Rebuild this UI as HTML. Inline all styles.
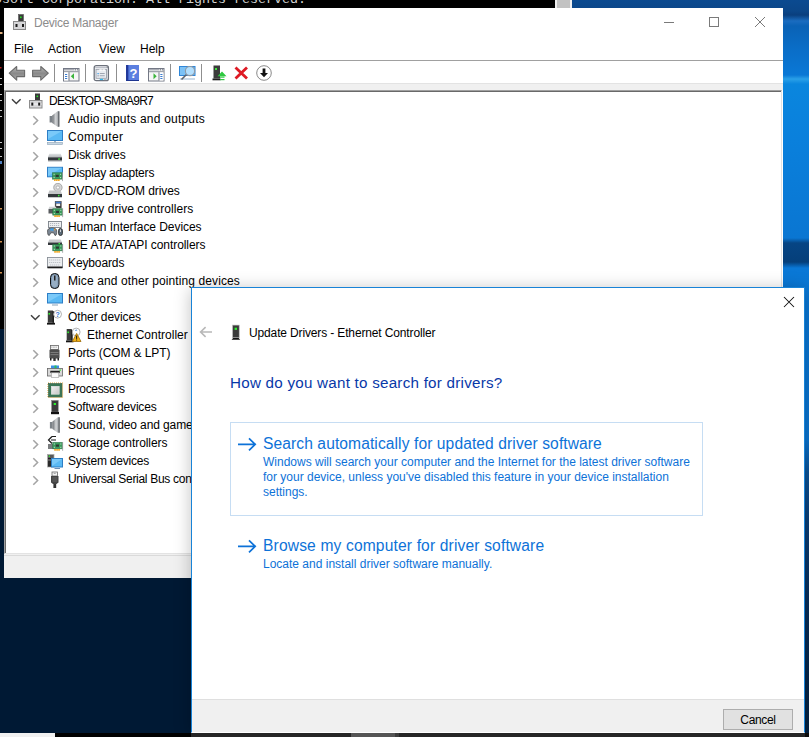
<!DOCTYPE html>
<html><head><meta charset="utf-8">
<style>
*{box-sizing:border-box;margin:0;padding:0}
html,body{width:809px;height:737px;overflow:hidden;position:relative;background:#001934;font-family:"Liberation Sans",sans-serif;}
.abs{position:absolute}
#blue{left:572px;top:0;width:237px;height:737px;background:linear-gradient(180deg,#0b4a90 0px,#0b4688 11px,#0a3f7e 15px,#1a6cc0 21px,#0a62b6 26px,#0a6ec8 50px,#0a78d6 75px,#2aa0e8 79px,#0a86de 84px,#0a80dc 140px,#0a76d2 238px,#064584 243px,#053f7a 262px,#0a78d6 268px,#0a74d0 440px,#0b5398 472px,#0a3f78 520px,#072f5c 600px,#03203f 737px)}
#console{left:0;top:0;width:555px;height:329px;background:#000}
#cscroll{left:555px;top:0;width:17px;height:329px;background:#f0f0f0}
#cthumb{left:557px;top:0;width:13px;height:8px;background:#c2c2c2}
#ctext{left:-6px;top:-8px;font-family:"Liberation Mono",monospace;font-size:13.33px;line-height:16px;color:#d4d4d4;white-space:pre}
#dm{left:3px;top:7px;width:781px;height:572px;background:#fff;background-clip:padding-box;border:1px solid transparent}
#dlg{left:191px;top:287px;width:614px;height:446px;background:#fff;border:1px solid #1883d7;border-bottom:1px solid #fff;box-shadow:0 2px 16px rgba(0,0,0,0.25)}


.t{position:absolute;white-space:nowrap;font-family:"Liberation Sans",sans-serif;color:#000}
.tr{font-size:12px;line-height:18px;letter-spacing:-0.1px}
.sep{top:64px;width:1px;height:18px;background:#8f8f8f}
#tree{left:4px;top:90px;width:778px;height:464px;border-top:1px solid #a0a0a0;border-left:1px solid #a0a0a0;border-right:1px solid #e3e3e3;border-bottom:1px solid #e3e3e3}
#tree:before{content:"";position:absolute;left:0;top:0;right:0;bottom:0;border-top:1px solid #696969;border-left:1px solid #696969}
</style></head><body>
<div class="abs" id="blue"></div>
<div class="abs" id="console"></div>
<div class="abs" id="cscroll"></div>
<div class="abs" id="cthumb"></div>
<div class="abs" id="ctext">osoft Corporation. All rights reserved.</div>
<!-- DM window -->
<div class="abs" id="dm"></div>
<svg class="abs" style="left:13px;top:14px" width="14" height="17" viewBox="0 0 14 17">
 <rect x="5.5" y="0.5" width="5" height="7" fill="#3a3a3a" stroke="#555" stroke-width="0.6"/>
 <rect x="7" y="2.5" width="1.6" height="1.6" fill="#22e022"/>
 <rect x="0.5" y="7.5" width="12" height="8" fill="#d6d6d8" stroke="#8a8a8a"/>
 <rect x="2.5" y="10" width="2" height="3" fill="#1a1a1a"/>
 <rect x="9" y="10" width="2" height="3" fill="#1a1a1a"/>
</svg>
<div class="abs t" style="left:34px;top:14px;font-size:12px;line-height:18px;color:#8c8c8c;letter-spacing:-0.25px">Device Manager</div>
<div class="abs" style="left:664px;top:22px;width:10px;height:1px;background:#7a7a7a"></div>
<div class="abs" style="left:709px;top:17px;width:10px;height:10px;border:1px solid #7a7a7a"></div>
<svg class="abs" style="left:754px;top:16px" width="12" height="12" viewBox="0 0 12 12"><path d="M1 1L11 11M11 1L1 11" stroke="#7a7a7a" stroke-width="1"/></svg>
<div class="abs t" style="left:14px;top:40px;font-size:12px;line-height:18px">File</div>
<div class="abs t" style="left:48px;top:40px;font-size:12px;line-height:18px">Action</div>
<div class="abs t" style="left:99px;top:40px;font-size:12px;line-height:18px">View</div>
<div class="abs t" style="left:140px;top:40px;font-size:12px;line-height:18px">Help</div>
<div class="abs" style="left:4px;top:60px;width:779px;height:1px;background:#a0a0a0"></div>
<div class="abs" style="left:4px;top:83px;width:779px;height:1px;background:#e3e3e3"></div>
<div class="abs" style="left:4px;top:84px;width:779px;height:6px;background:#f0f0f0"></div>
<div class="abs" id="tree"></div>
<div class="abs" style="left:4px;top:554px;width:779px;height:24px;background:#f0f0f0"></div><div class="abs" style="left:4px;top:555px;width:779px;height:1px;background:#dadada"></div>
<!-- toolbar -->
<svg class="abs" style="left:8px;top:65px" width="42" height="17" viewBox="0 0 42 17">
 <defs><linearGradient id="ga" x1="0" y1="0" x2="0" y2="1"><stop offset="0" stop-color="#b8b8b8"/><stop offset="0.5" stop-color="#8a8a8a"/><stop offset="1" stop-color="#a8a8a8"/></linearGradient></defs>
 <path d="M1.2 8.2L8.7 1.5V5.2H16.6V11.6H8.7V15.2Z" fill="url(#ga)" stroke="#6a6a6a" stroke-width="1.1" stroke-linejoin="round"/>
 <path d="M40.3 8.2L32.8 1.5V5.2H24.6V11.6H32.8V15.2Z" fill="url(#ga)" stroke="#6a6a6a" stroke-width="1.1" stroke-linejoin="round"/>
</svg>
<div class="abs sep" style="left:54px"></div>
<div class="abs sep" style="left:85px"></div>
<div class="abs sep" style="left:116px"></div>
<div class="abs sep" style="left:170px"></div>
<div class="abs sep" style="left:201px"></div>
<svg class="abs" style="left:63px;top:68px" width="17" height="14" viewBox="0 0 17 14">
 <rect x="0.5" y="0.5" width="15.5" height="12.5" fill="#f6f6f6" stroke="#737885"/>
 <rect x="1" y="1.3" width="10.5" height="1" fill="#8a8f9a"/>
 <rect x="12" y="1.2" width="1.2" height="1.2" fill="#737885"/><rect x="14" y="1.2" width="1.2" height="1.2" fill="#737885"/>
 <rect x="1" y="3.2" width="14.5" height="1" fill="#8a8f9a"/>
 <rect x="1" y="4.5" width="4.5" height="8" fill="#ffffff"/>
 <rect x="5.5" y="4.2" width="1" height="8.5" fill="#737885"/>
 <rect x="2" y="6" width="2.2" height="1" fill="#3a7cd0"/><rect x="2" y="8" width="2.2" height="1" fill="#3a7cd0"/><rect x="2" y="10" width="2.2" height="1" fill="#3a7cd0"/>
 <path d="M7.8 8.2L11 5.2V11.2Z" fill="#3cb43c"/>
</svg>
<svg class="abs" style="left:93px;top:65px" width="17" height="17" viewBox="0 0 17 17">
 <rect x="1.2" y="0.7" width="14.2" height="15" rx="2" fill="#f4f5f7" stroke="#6c717b" stroke-width="1.3"/>
 <rect x="2.2" y="2" width="11" height="0.8" fill="#b0b5be"/><rect x="13.5" y="1.6" width="1.2" height="1.3" fill="#6c717b"/>
 <rect x="3" y="4.3" width="10.5" height="9" fill="#e9ecf1" stroke="#9aa0ab" stroke-width="0.9"/>
 <rect x="6.3" y="4.3" width="2.5" height="1.4" fill="#fff"/><rect x="9.5" y="4.3" width="2.5" height="1.4" fill="#fff"/>
 <rect x="4.5" y="8" width="1.2" height="1.2" fill="#2f9ae8"/><rect x="6.7" y="8.2" width="5" height="0.8" fill="#8c94a2"/>
 <rect x="4.5" y="10.2" width="1.2" height="1.2" fill="#8c94a2"/><rect x="6.7" y="10.4" width="5" height="0.8" fill="#8c94a2"/>
 <rect x="6.8" y="13.8" width="3.2" height="1.3" fill="#2fb8f0"/><rect x="10.6" y="13.8" width="3" height="1.3" fill="#b8bcc4"/>
</svg>
<svg class="abs" style="left:126px;top:65px" width="14" height="16" viewBox="0 0 14 16">
 <rect x="0" y="0" width="13" height="16" fill="#3558c8"/>
 <rect x="0" y="0" width="2.5" height="16" fill="#22399a"/>
 <rect x="2.5" y="0" width="10.5" height="16" fill="#5b7fe0"/>
 <rect x="0" y="15" width="13" height="1" fill="#1e3590"/>
 <text x="7.6" y="13" font-family="Liberation Sans" font-weight="bold" font-size="13" fill="#fff" text-anchor="middle">?</text>
</svg>
<svg class="abs" style="left:148px;top:68px" width="17" height="14" viewBox="0 0 17 14">
 <rect x="0.5" y="0.5" width="15.5" height="12.5" fill="#f6f6f6" stroke="#737885"/>
 <rect x="1" y="1.3" width="10.5" height="1" fill="#8a8f9a"/>
 <rect x="12" y="1.2" width="1.2" height="1.2" fill="#737885"/><rect x="14" y="1.2" width="1.2" height="1.2" fill="#737885"/>
 <rect x="1" y="3.2" width="14.5" height="1" fill="#8a8f9a"/>
 <rect x="11" y="4.5" width="4.5" height="8" fill="#ffffff"/>
 <rect x="10.5" y="4.2" width="1" height="8.5" fill="#737885"/>
 <rect x="12.3" y="6" width="2.2" height="1" fill="#3a7cd0"/><rect x="12.3" y="8" width="2.2" height="1" fill="#3a7cd0"/><rect x="12.3" y="10" width="2.2" height="1" fill="#3a7cd0"/>
 <path d="M8.7 8.2L5.5 5.2V11.2Z" fill="#3cb43c"/>
</svg>
<svg class="abs" style="left:179px;top:66px" width="17" height="16" viewBox="0 0 17 16">
 <rect x="0.5" y="0.5" width="15.5" height="9" fill="#7cc2f6" stroke="#2f86d8"/>
 <rect x="1" y="12.5" width="15" height="1" fill="#9ab8d4"/>
 <path d="M7.5 8.5L2.5 13.5" stroke="#5f646c" stroke-width="1.6"/>
 <circle cx="11" cy="5" r="4.6" fill="#b8e2ff" fill-opacity="0.9" stroke="#8f99a4" stroke-width="1.1"/>
</svg>
<svg class="abs" style="left:212px;top:65px" width="15" height="17" viewBox="0 0 15 17">
 <rect x="1.5" y="0.5" width="6.5" height="13" fill="#3b3b3b"/>
 <rect x="3" y="3" width="2" height="2" fill="#3ee83e"/>
 <rect x="0.5" y="13.5" width="8" height="1.8" fill="#1e1e1e"/>
 <path d="M5.5 11.2L10 6.6L14.5 11.2Z" fill="#2ec840"/>
 <rect x="8" y="11.5" width="4.5" height="1.2" fill="#2ec840"/>
 <rect x="8" y="14" width="4.5" height="1.2" fill="#2ec840"/>
</svg>
<svg class="abs" style="left:234px;top:66px" width="15" height="14" viewBox="0 0 15 14">
 <path d="M1.5 1.5L13 12.5M13 1.5L1.5 12.5" stroke="#de1a24" stroke-width="2.8"/>
</svg>
<svg class="abs" style="left:256px;top:65px" width="17" height="17" viewBox="0 0 17 17">
 <circle cx="8" cy="8" r="7.3" fill="#fff" stroke="#8a8a8a" stroke-width="1"/>
 <path d="M6.6 3.5H9.4V8H12L8 12.3L4 8H6.6Z" fill="#111"/>
</svg>
<div class="abs" style="left:6px;top:92px;width:775px;height:461px;overflow:hidden">
<svg class="abs" style="left:5px;top:6px" width="11" height="8" viewBox="0 0 11 8"><path d="M1 1.2L5.3 5.5L9.6 1.2" fill="none" stroke="#404040" stroke-width="1.5"/></svg>
<svg class="abs" style="left:23px;top:1px" width="14" height="16" viewBox="0 0 14 16">
 <rect x="6" y="0.5" width="5" height="7" fill="#3a3a3a"/>
 <rect x="7.6" y="2.6" width="1.5" height="1.5" fill="#2ef02e"/>
 <rect x="0.5" y="7.5" width="12.5" height="7.5" fill="#d8d8da" stroke="#8c8c8c"/>
 <rect x="1" y="10.3" width="11.5" height="1.5" fill="#ececee"/>
 <rect x="2.3" y="9.6" width="2" height="3" fill="#1a1a1a"/>
 <rect x="9.2" y="9.6" width="2" height="3" fill="#1a1a1a"/>
</svg>
<div class="abs t tr" style="left:43px;top:0px;letter-spacing:-0.79px">DESKTOP-SM8A9R7</div>
<svg class="abs" style="left:26px;top:23px" width="8" height="11" viewBox="0 0 8 11"><path d="M1.3 1.2L5.6 5.5L1.3 9.8" fill="none" stroke="#a4a4a4" stroke-width="1.55"/></svg>
<svg class="abs" style="left:41px;top:19px" width="17" height="17" viewBox="0 0 17 17">
 <defs><linearGradient id="spk1" x1="0" y1="0" x2="1" y2="0"><stop offset="0" stop-color="#6b6f74"/><stop offset="0.5" stop-color="#d4d6d8"/><stop offset="1" stop-color="#8d9196"/></linearGradient></defs>
 <rect x="2.6" y="5" width="2.6" height="6.5" fill="#7c8288"/>
 <path d="M5.2 4.5L10.5 0.3H12.2V15.7H10.5L5.2 12Z" fill="url(#spk1)"/>
 <rect x="11.2" y="0.3" width="1.2" height="15.4" fill="#5e6266"/>
</svg>
<div class="abs t tr" style="left:62px;top:18px;letter-spacing:0.2px">Audio inputs and outputs</div>
<svg class="abs" style="left:26px;top:41px" width="8" height="11" viewBox="0 0 8 11"><path d="M1.3 1.2L5.6 5.5L1.3 9.8" fill="none" stroke="#a4a4a4" stroke-width="1.55"/></svg>
<svg class="abs" style="left:41px;top:37px" width="17" height="17" viewBox="0 0 17 17">
 <rect x="0.5" y="1.5" width="15" height="10" fill="#5ab9f4" stroke="#2d7ec6"/>
 <path d="M1 2H15L1 10Z" fill="#8fd3fb" opacity="0.6"/>
 <rect x="7" y="12" width="2" height="1.5" fill="#9db2c4"/>
 <rect x="0.5" y="13.5" width="15" height="2" fill="#c9d7e2" stroke="#8aa2b8" stroke-width="0.6"/>
</svg>
<div class="abs t tr" style="left:62px;top:36px;letter-spacing:0.33px">Computer</div>
<svg class="abs" style="left:26px;top:59px" width="8" height="11" viewBox="0 0 8 11"><path d="M1.3 1.2L5.6 5.5L1.3 9.8" fill="none" stroke="#a4a4a4" stroke-width="1.55"/></svg>
<svg class="abs" style="left:41px;top:55px" width="17" height="17" viewBox="0 0 17 17">
 <defs><linearGradient id="dtop" x1="0" y1="0" x2="0" y2="1"><stop offset="0" stop-color="#e2e4e6"/><stop offset="1" stop-color="#b4b7ba"/></linearGradient></defs>
 <path d="M2.3 6.7H13.7L15 10.3H1Z" fill="url(#dtop)"/>
 <rect x="1" y="10.3" width="14" height="3.4" fill="#33373b"/>
 <rect x="1" y="13.7" width="14" height="1.1" fill="#c8cacc"/>
 <rect x="11.3" y="11.3" width="1.5" height="1.5" fill="#3df23d"/>
</svg>
<div class="abs t tr" style="left:62px;top:54px;letter-spacing:-0.1px">Disk drives</div>
<svg class="abs" style="left:26px;top:77px" width="8" height="11" viewBox="0 0 8 11"><path d="M1.3 1.2L5.6 5.5L1.3 9.8" fill="none" stroke="#a4a4a4" stroke-width="1.55"/></svg>
<svg class="abs" style="left:41px;top:73px" width="17" height="17" viewBox="0 0 17 17">
 <rect x="0.5" y="2.3" width="15" height="9.5" fill="#5ab9f4" stroke="#2d7ec6"/>
 <path d="M1 2.8H15L1 11Z" fill="#8fd3fb" opacity="0.6"/>

 <rect x="5.6" y="7.8" width="9.5" height="6.3" fill="#3c9c5c" stroke="#247040" stroke-width="0.6"/>
 <rect x="8.6" y="9.8" width="3.2" height="2.2" fill="#2d3a33"/>
 <rect x="6.6" y="8.8" width="1" height="1" fill="#cfe8d6"/><rect x="13.1" y="8.8" width="1" height="1" fill="#cfe8d6"/>
 <rect x="6.6" y="12.1" width="1" height="1" fill="#cfe8d6"/><rect x="13.1" y="12.1" width="1" height="1" fill="#cfe8d6"/>
 <path d="M7.1 15.1H13.1" stroke="#f0a010" stroke-width="1.8" stroke-dasharray="1.5 0.5"/>
 <rect x="15.1" y="7.3" width="0.8" height="8.8" fill="#9a9a9a"/>
</svg>
<div class="abs t tr" style="left:62px;top:72px;letter-spacing:-0.2px">Display adapters</div>
<svg class="abs" style="left:26px;top:95px" width="8" height="11" viewBox="0 0 8 11"><path d="M1.3 1.2L5.6 5.5L1.3 9.8" fill="none" stroke="#a4a4a4" stroke-width="1.55"/></svg>
<svg class="abs" style="left:41px;top:91px" width="17" height="17" viewBox="0 0 17 17">
 <circle cx="10.9" cy="4.5" r="4.2" fill="#d4d4d4" stroke="#9a9a9a" stroke-width="0.8"/>
 <circle cx="10.9" cy="4.5" r="1.6" fill="#fafafa" stroke="#9c9c9c" stroke-width="0.6"/>
 <path d="M2.3 7.6H13.7L15 11H1Z" fill="#c4c6c8"/>
 <rect x="1" y="11" width="14" height="3" fill="#33373b"/>
 <rect x="1" y="14" width="14" height="1" fill="#c8cacc"/>
 <rect x="11" y="11.8" width="1.5" height="1.5" fill="#3df23d"/>
</svg>
<div class="abs t tr" style="left:62px;top:90px;letter-spacing:-0.1px">DVD/CD-ROM drives</div>
<svg class="abs" style="left:26px;top:113px" width="8" height="11" viewBox="0 0 8 11"><path d="M1.3 1.2L5.6 5.5L1.3 9.8" fill="none" stroke="#a4a4a4" stroke-width="1.55"/></svg>
<svg class="abs" style="left:41px;top:109px" width="17" height="17" viewBox="0 0 17 17">
 <rect x="8.2" y="0.5" width="6" height="6.5" fill="#3a3a3a" stroke="#444" stroke-width="0.6"/>
 <rect x="8.6" y="0.8" width="5.2" height="1.6" fill="#3a78d0"/>
 <rect x="9.2" y="2.6" width="4" height="2.4" fill="#f2f2f2"/>
 <path d="M2.3 5.8H9L9.5 8H1.5Z" fill="#d0d2d4"/>
 <rect x="1.5" y="8" width="7" height="4.5" fill="#585b5e"/>

 <rect x="5.8" y="7.8" width="9.5" height="6.3" fill="#3c9c5c" stroke="#247040" stroke-width="0.6"/>
 <rect x="8.8" y="9.8" width="3.2" height="2.2" fill="#2d3a33"/>
 <rect x="6.8" y="8.8" width="1" height="1" fill="#cfe8d6"/><rect x="13.3" y="8.8" width="1" height="1" fill="#cfe8d6"/>
 <rect x="6.8" y="12.1" width="1" height="1" fill="#cfe8d6"/><rect x="13.3" y="12.1" width="1" height="1" fill="#cfe8d6"/>
 <path d="M7.3 15.1H13.3" stroke="#f0a010" stroke-width="1.8" stroke-dasharray="1.5 0.5"/>
 <rect x="15.3" y="7.3" width="0.8" height="8.8" fill="#9a9a9a"/>
</svg>
<div class="abs t tr" style="left:62px;top:108px;letter-spacing:0.05px">Floppy drive controllers</div>
<svg class="abs" style="left:26px;top:131px" width="8" height="11" viewBox="0 0 8 11"><path d="M1.3 1.2L5.6 5.5L1.3 9.8" fill="none" stroke="#a4a4a4" stroke-width="1.55"/></svg>
<svg class="abs" style="left:41px;top:127px" width="17" height="17" viewBox="0 0 17 17">
 <rect x="1.5" y="2.5" width="13" height="6" fill="#eef0f2" stroke="#7a8088" stroke-width="0.9"/>
 <path d="M3 4.5H13M3 6.5H13" stroke="#aab0b8" stroke-width="0.9" stroke-dasharray="1.2 0.8"/>
 <path d="M0.6 11Q0.2 16.5 2.3 16.5L3.8 13.8H6.6L8 16.5Q10.2 16.5 9.6 11Q9.2 9 5.1 9Q1 9 0.6 11Z" fill="#7d8894" stroke="#2a2a2a" stroke-width="0.6"/>
 <rect x="3.4" y="9.4" width="3.4" height="2.2" fill="#3aa0f0"/>
 <rect x="6.8" y="9.8" width="1.5" height="1.5" fill="#e8a03a"/>
 <rect x="11.6" y="9.5" width="3.8" height="7" rx="1.9" fill="#5a6a78" stroke="#1a1a1a" stroke-width="0.8"/>
 <rect x="13.1" y="10.5" width="0.8" height="2.5" fill="#eee"/>
</svg>
<div class="abs t tr" style="left:62px;top:126px;letter-spacing:-0.05px">Human Interface Devices</div>
<svg class="abs" style="left:26px;top:149px" width="8" height="11" viewBox="0 0 8 11"><path d="M1.3 1.2L5.6 5.5L1.3 9.8" fill="none" stroke="#a4a4a4" stroke-width="1.55"/></svg>
<svg class="abs" style="left:41px;top:145px" width="17" height="17" viewBox="0 0 17 17">
 <path d="M2.3 2.5H13.7L15 5.5H1Z" fill="#c8cacc"/>
 <rect x="1" y="5.5" width="14" height="2.5" fill="#33373b"/>
 <rect x="11.5" y="6" width="1.5" height="1.5" fill="#3df23d"/>

 <rect x="5.8" y="7.5" width="9.5" height="6.3" fill="#3c9c5c" stroke="#247040" stroke-width="0.6"/>
 <rect x="8.8" y="9.5" width="3.2" height="2.2" fill="#2d3a33"/>
 <rect x="6.8" y="8.5" width="1" height="1" fill="#cfe8d6"/><rect x="13.3" y="8.5" width="1" height="1" fill="#cfe8d6"/>
 <rect x="6.8" y="11.8" width="1" height="1" fill="#cfe8d6"/><rect x="13.3" y="11.8" width="1" height="1" fill="#cfe8d6"/>
 <path d="M7.3 14.8H13.3" stroke="#f0a010" stroke-width="1.8" stroke-dasharray="1.5 0.5"/>
 <rect x="15.3" y="7.0" width="0.8" height="8.8" fill="#9a9a9a"/>
</svg>
<div class="abs t tr" style="left:62px;top:144px;letter-spacing:-0.07px">IDE ATA/ATAPI controllers</div>
<svg class="abs" style="left:26px;top:167px" width="8" height="11" viewBox="0 0 8 11"><path d="M1.3 1.2L5.6 5.5L1.3 9.8" fill="none" stroke="#a4a4a4" stroke-width="1.55"/></svg>
<svg class="abs" style="left:41px;top:163px" width="17" height="17" viewBox="0 0 17 17">
 <rect x="0.5" y="2.5" width="15" height="10" fill="#eceef0" stroke="#8a9098" stroke-width="0.9"/>
 <path d="M2 5H14M2 7.5H14M3 10H13" stroke="#bfc3c8" stroke-width="1" stroke-dasharray="1.3 0.7"/>
 <rect x="0.5" y="11.5" width="15" height="1.8" fill="#1c1c1c"/>
</svg>
<div class="abs t tr" style="left:62px;top:162px;letter-spacing:-0.12px">Keyboards</div>
<svg class="abs" style="left:26px;top:185px" width="8" height="11" viewBox="0 0 8 11"><path d="M1.3 1.2L5.6 5.5L1.3 9.8" fill="none" stroke="#a4a4a4" stroke-width="1.55"/></svg>
<svg class="abs" style="left:41px;top:181px" width="17" height="17" viewBox="0 0 17 17">
 <rect x="3.5" y="0.5" width="8.5" height="15" rx="4" fill="#7d96b0" stroke="#111" stroke-width="1"/>
 <rect x="5" y="2" width="5.5" height="12" rx="2.7" fill="#97aec4"/>
 <rect x="7" y="2.5" width="1.5" height="5" fill="#222"/>
</svg>
<div class="abs t tr" style="left:62px;top:180px;letter-spacing:0.1px">Mice and other pointing devices</div>
<svg class="abs" style="left:26px;top:203px" width="8" height="11" viewBox="0 0 8 11"><path d="M1.3 1.2L5.6 5.5L1.3 9.8" fill="none" stroke="#a4a4a4" stroke-width="1.55"/></svg>
<svg class="abs" style="left:41px;top:199px" width="17" height="17" viewBox="0 0 17 17">
 <rect x="0.5" y="2.5" width="15" height="9.5" fill="#5ab9f4" stroke="#2d7ec6"/>
 <path d="M1 3H15L1 11Z" fill="#8fd3fb" opacity="0.6"/>
 <rect x="5" y="13.5" width="6" height="1" fill="#8aa2b8"/>
</svg>
<div class="abs t tr" style="left:62px;top:198px;letter-spacing:0.4px">Monitors</div>
<svg class="abs" style="left:24px;top:222px" width="11" height="8" viewBox="0 0 11 8"><path d="M1 1.2L5.3 5.5L9.6 1.2" fill="none" stroke="#404040" stroke-width="1.5"/></svg>
<svg class="abs" style="left:41px;top:217px" width="17" height="17" viewBox="0 0 17 17">
 <path d="M0.8 1.5H5.5L7 3V13.8H0.8Z" fill="#3b3b3b"/>
 <path d="M5.5 1.5L7 3V13.8H5.5Z" fill="#1e1e1e"/>
 <rect x="1.5" y="4" width="1.6" height="1.6" fill="#2ef02e"/>
 <rect x="0" y="13.8" width="8" height="1.8" fill="#151515"/>
 <circle cx="10.6" cy="5.2" r="3.9" fill="#fff" stroke="#a8a8a8" stroke-width="0.9"/>
 <text x="10.6" y="8" font-family="Liberation Sans" font-weight="bold" font-size="7" fill="#2a70d0" text-anchor="middle">?</text>
</svg>
<div class="abs t tr" style="left:62px;top:216px;letter-spacing:-0.08px">Other devices</div>
<svg class="abs" style="left:60px;top:235px" width="17" height="17" viewBox="0 0 17 17">
 <path d="M0.7 2H5.2L6.5 3.5V13.5H0.7Z" fill="#3b3b3b"/>
 <path d="M5.2 2L6.5 3.5V13.5H5.2Z" fill="#1e1e1e"/>
 <rect x="1.4" y="4.5" width="1.6" height="1.6" fill="#2ef02e"/>
 <rect x="0" y="13.5" width="7.5" height="1.8" fill="#151515"/>
 <circle cx="10.2" cy="5" r="3.9" fill="#fff" stroke="#a8a8a8" stroke-width="0.9"/>
 <path d="M9.3 3.5Q10.2 2.6 11.1 3.5" fill="none" stroke="#2a70d0" stroke-width="0.9"/>
 <path d="M10.65 6.4L15 14.5H6.3Z" fill="#f2b316" stroke="#9a6a08" stroke-width="0.8" stroke-linejoin="round"/>
 <rect x="10.15" y="8.6" width="1" height="3.3" fill="#111"/>
 <rect x="10.15" y="12.5" width="1" height="1" fill="#111"/>
</svg>
<div class="abs t tr" style="left:81px;top:234px;letter-spacing:0.0px">Ethernet Controller</div>
<svg class="abs" style="left:26px;top:257px" width="8" height="11" viewBox="0 0 8 11"><path d="M1.3 1.2L5.6 5.5L1.3 9.8" fill="none" stroke="#a4a4a4" stroke-width="1.55"/></svg>
<svg class="abs" style="left:41px;top:253px" width="17" height="17" viewBox="0 0 17 17">
 <rect x="3.5" y="0.5" width="8" height="4" fill="#f4f4f4" stroke="#666" stroke-width="0.8"/>
 <path d="M4.8 1.5V3M6.3 1.5V3M7.8 1.5V3M9.3 1.5V3" stroke="#999" stroke-width="0.6"/>
 <rect x="2.5" y="4.5" width="10" height="9" rx="1" fill="#4d4d4d"/>
 <rect x="3.5" y="7" width="8" height="0.8" fill="#888"/><rect x="3.5" y="9.3" width="8" height="0.8" fill="#888"/>
 <rect x="3" y="13" width="1.5" height="2.5" fill="#222"/><rect x="10.5" y="13" width="1.5" height="2.5" fill="#222"/>
 <rect x="6.3" y="13" width="2.4" height="3" fill="#333"/>
</svg>
<div class="abs t tr" style="left:62px;top:252px;letter-spacing:-0.1px">Ports (COM &amp; LPT)</div>
<svg class="abs" style="left:26px;top:275px" width="8" height="11" viewBox="0 0 8 11"><path d="M1.3 1.2L5.6 5.5L1.3 9.8" fill="none" stroke="#a4a4a4" stroke-width="1.55"/></svg>
<svg class="abs" style="left:41px;top:271px" width="17" height="17" viewBox="0 0 17 17">
 <rect x="4" y="2.5" width="8" height="3.5" fill="#3a90e8"/>
 <rect x="7.5" y="2.5" width="2" height="3.5" fill="#2ec050"/>
 <rect x="0.5" y="5.5" width="15" height="7.5" fill="#d8d8d8" stroke="#666" stroke-width="0.8"/>
 <rect x="12.5" y="6.5" width="1.5" height="1.2" fill="#2ef02e"/>
 <rect x="3.3" y="7.8" width="9.5" height="2" fill="#1e1e1e"/>
 <rect x="4.3" y="9.8" width="7.5" height="4.5" fill="#fafafa" stroke="#999" stroke-width="0.6"/>
</svg>
<div class="abs t tr" style="left:62px;top:270px;letter-spacing:-0.08px">Print queues</div>
<svg class="abs" style="left:26px;top:293px" width="8" height="11" viewBox="0 0 8 11"><path d="M1.3 1.2L5.6 5.5L1.3 9.8" fill="none" stroke="#a4a4a4" stroke-width="1.55"/></svg>
<svg class="abs" style="left:41px;top:289px" width="17" height="17" viewBox="0 0 17 17">
 <rect x="1" y="2" width="14.5" height="14.5" fill="none" stroke="#e2a43a" stroke-width="1.1" stroke-dasharray="1 1"/>
 <rect x="1.6" y="2.6" width="13.3" height="13.3" fill="#3a7656" stroke="#2a5a40" stroke-width="0.6"/>
 <defs><linearGradient id="cpug" x1="0" y1="0" x2="1" y2="1"><stop offset="0" stop-color="#f4f4f4"/><stop offset="1" stop-color="#c4c4c4"/></linearGradient></defs>
 <rect x="4.3" y="5.3" width="7.9" height="7.9" fill="url(#cpug)" stroke="#e8e8e8" stroke-width="0.6"/>
</svg>
<div class="abs t tr" style="left:62px;top:288px;letter-spacing:-0.33px">Processors</div>
<svg class="abs" style="left:26px;top:311px" width="8" height="11" viewBox="0 0 8 11"><path d="M1.3 1.2L5.6 5.5L1.3 9.8" fill="none" stroke="#a4a4a4" stroke-width="1.55"/></svg>
<svg class="abs" style="left:41px;top:307px" width="17" height="17" viewBox="0 0 17 17">
 <rect x="4.7" y="1.5" width="6.5" height="11.5" fill="#3b3b3b" stroke="#777" stroke-width="0.5"/>
 <rect x="6.7" y="4" width="2.3" height="2" fill="#2ef02e"/>
 <rect x="4" y="13" width="8" height="2.2" fill="#111"/>
</svg>
<div class="abs t tr" style="left:62px;top:306px;letter-spacing:-0.18px">Software devices</div>
<svg class="abs" style="left:26px;top:329px" width="8" height="11" viewBox="0 0 8 11"><path d="M1.3 1.2L5.6 5.5L1.3 9.8" fill="none" stroke="#a4a4a4" stroke-width="1.55"/></svg>
<svg class="abs" style="left:41px;top:325px" width="17" height="17" viewBox="0 0 17 17">
 <defs><linearGradient id="spk18" x1="0" y1="0" x2="1" y2="0"><stop offset="0" stop-color="#6b6f74"/><stop offset="0.5" stop-color="#d4d6d8"/><stop offset="1" stop-color="#8d9196"/></linearGradient></defs>
 <rect x="2.9" y="5" width="2.6" height="6.5" fill="#7c8288"/>
 <path d="M5.5 4.5L10.8 0.3H12.5V15.7H10.8L5.5 12Z" fill="url(#spk18)"/>
 <rect x="11.5" y="0.3" width="1.2" height="15.4" fill="#5e6266"/>
</svg>
<div class="abs t tr" style="left:62px;top:324px;letter-spacing:-0.1px">Sound, video and game controllers</div>
<svg class="abs" style="left:26px;top:347px" width="8" height="11" viewBox="0 0 8 11"><path d="M1.3 1.2L5.6 5.5L1.3 9.8" fill="none" stroke="#a4a4a4" stroke-width="1.55"/></svg>
<svg class="abs" style="left:41px;top:343px" width="17" height="17" viewBox="0 0 17 17">
 <path d="M5 1.5L1.5 5L5 8.5M4 5H9" fill="none" stroke="#1a1a1a" stroke-width="1.2"/>
 <path d="M5 1.5H9" stroke="#1a1a1a" stroke-width="1"/>
 <rect x="1" y="9" width="6" height="5" fill="#7a7c7e"/>

 <rect x="5.8" y="7.5" width="9.5" height="6.3" fill="#3c9c5c" stroke="#247040" stroke-width="0.6"/>
 <rect x="8.8" y="9.5" width="3.2" height="2.2" fill="#2d3a33"/>
 <rect x="6.8" y="8.5" width="1" height="1" fill="#cfe8d6"/><rect x="13.3" y="8.5" width="1" height="1" fill="#cfe8d6"/>
 <rect x="6.8" y="11.8" width="1" height="1" fill="#cfe8d6"/><rect x="13.3" y="11.8" width="1" height="1" fill="#cfe8d6"/>
 <path d="M7.3 14.8H13.3" stroke="#f0a010" stroke-width="1.8" stroke-dasharray="1.5 0.5"/>
 <rect x="15.3" y="7.0" width="0.8" height="8.8" fill="#9a9a9a"/>
</svg>
<div class="abs t tr" style="left:62px;top:342px;letter-spacing:-0.07px">Storage controllers</div>
<svg class="abs" style="left:26px;top:365px" width="8" height="11" viewBox="0 0 8 11"><path d="M1.3 1.2L5.6 5.5L1.3 9.8" fill="none" stroke="#a4a4a4" stroke-width="1.55"/></svg>
<svg class="abs" style="left:41px;top:361px" width="17" height="17" viewBox="0 0 17 17">
 <rect x="0.5" y="1.5" width="6.5" height="12.5" fill="#5a5a5a" stroke="#aaa" stroke-width="0.7"/>
 <rect x="1.7" y="2.5" width="1.3" height="1.3" fill="#2ef02e"/>
 <rect x="1" y="5" width="5.5" height="1" fill="#222"/>
 <rect x="1" y="8" width="4" height="5.5" fill="#2a2a2a"/>
 <rect x="4.5" y="5.5" width="11" height="8.5" fill="#5ab9f4" stroke="#2d7ec6"/>
 <path d="M5 6H15L5 13Z" fill="#8fd3fb" opacity="0.6"/>
 <rect x="7.5" y="15" width="5.5" height="1" fill="#6c8fb8"/>
</svg>
<div class="abs t tr" style="left:62px;top:360px;letter-spacing:-0.22px">System devices</div>
<svg class="abs" style="left:26px;top:383px" width="8" height="11" viewBox="0 0 8 11"><path d="M1.3 1.2L5.6 5.5L1.3 9.8" fill="none" stroke="#a4a4a4" stroke-width="1.55"/></svg>
<svg class="abs" style="left:41px;top:379px" width="17" height="17" viewBox="0 0 17 17">
 <rect x="5" y="1" width="5.5" height="4" fill="#f2f2f2" stroke="#666" stroke-width="0.8"/>
 <rect x="6.7" y="2" width="2" height="1" fill="#aaa"/>
 <path d="M4 5H11.5V11.5L9.5 13H6L4 11.5Z" fill="#444"/>
 <rect x="5.3" y="6" width="5" height="5" fill="#555"/>
 <rect x="6.4" y="13" width="2.8" height="4" fill="#333"/>
</svg>
<div class="abs t tr" style="left:62px;top:378px;letter-spacing:-0.3px">Universal Serial Bus controllers</div>
</div><!-- dialog -->
<div class="abs" id="dlg"></div>
<svg class="abs" style="left:783px;top:296px" width="12" height="12" viewBox="0 0 12 12"><path d="M1 1L11 11M11 1L1 11" stroke="#111" stroke-width="1.05"/></svg>
<svg class="abs" style="left:199px;top:326px" width="14" height="12" viewBox="0 0 14 12"><path d="M13 6H2M6.6 1.2L1.6 6L6.6 10.8" fill="none" stroke="#b8b8b8" stroke-width="1.6"/></svg>
<svg class="abs" style="left:231px;top:324px" width="11" height="17" viewBox="0 0 11 17">
 <rect x="1.6" y="1.1" width="6.6" height="12.7" fill="#3a3a3a" stroke="#b8b8b8" stroke-width="0.6"/>
 <rect x="3.6" y="3.7" width="2.4" height="2.2" fill="#2ef02e"/>
 <path d="M2.2 14H7.6L9.2 15.8H0.6Z" fill="#111"/>
</svg>
<div class="abs t" style="left:249px;top:324px;font-size:12px;line-height:18px;letter-spacing:-0.14px;color:#000">Update Drivers - Ethernet Controller</div>
<div class="abs t" style="left:230px;top:373px;font-size:15.2px;line-height:20px;letter-spacing:0.24px;color:#0838a8">How do you want to search for drivers?</div>
<div class="abs" style="left:230px;top:422px;width:473px;height:94px;border:1px solid #c6ddf3"></div>
<svg class="abs" style="left:237px;top:437px" width="20" height="15" viewBox="0 0 20 15"><path d="M1 7.3H18M12 1.3L18.2 7.3L12 13.3" fill="none" stroke="#0d72d8" stroke-width="1.7"/></svg>
<div class="abs t" style="left:263px;top:434px;font-size:15.6px;line-height:20px;color:#0d72d8;letter-spacing:0.09px">Search automatically for updated driver software</div>
<div class="abs t" style="left:263px;top:455px;font-size:12px;line-height:15px;color:#0d72d8;width:440px">Windows will search your computer and the Internet for the latest driver software<br>for your device, unless you've disabled this feature in your device installation<br>settings.</div>
<svg class="abs" style="left:237px;top:539px" width="20" height="15" viewBox="0 0 20 15"><path d="M1 7.3H18M12 1.3L18.2 7.3L12 13.3" fill="none" stroke="#0d72d8" stroke-width="1.7"/></svg>
<div class="abs t" style="left:263px;top:536px;font-size:15.6px;line-height:20px;color:#0d72d8;letter-spacing:0.15px">Browse my computer for driver software</div>
<div class="abs t" style="left:263px;top:557px;font-size:12px;line-height:15px;color:#0d72d8">Locate and install driver software manually.</div>
<div class="abs" style="left:192px;top:699px;width:612px;height:1px;background:#dfdfdf"></div>
<div class="abs" style="left:192px;top:700px;width:612px;height:32px;background:#f0f0f0"></div>
<div class="abs" style="left:723px;top:709px;width:70px;height:21px;background:#e1e1e1;border:1px solid #adadad"></div>
<div class="abs t" style="left:723px;top:713px;width:70px;text-align:center;font-size:12px;line-height:14px;letter-spacing:-0.35px;color:#000">Cancel</div>
<div class="abs" style="left:0;top:733px;width:809px;height:4px;background:#262626"></div>
<div class="abs" style="left:0;top:733px;width:55px;height:4px;background:#f0f0f0"></div>
<div class="abs" style="left:55px;top:733px;width:136px;height:4px;background:#000"></div>
<div class="abs" style="left:351px;top:733px;width:44px;height:4px;background:#555"></div>
<div class="abs" style="left:395px;top:733px;width:4px;height:4px;background:#3c3c3c"></div>
<div class="abs" style="left:805px;top:733px;width:4px;height:4px;background:#0c0c0c"></div>
<svg class="abs" style="left:0;top:0" width="4" height="330" viewBox="0 0 4 330">
 <rect x="0" y="32" width="2.5" height="2" fill="#e0b080"/>
 <rect x="0" y="67" width="1.5" height="1.5" fill="#b02020"/>
 <g fill="#c8c8c8"><rect x="0" y="78" width="2" height="1"/><rect x="0" y="84" width="2" height="1"/><rect x="0" y="94" width="2" height="1"/><rect x="0" y="100" width="2" height="1"/><rect x="0" y="110" width="2" height="1"/><rect x="0" y="116" width="2" height="1"/><rect x="0" y="142" width="2" height="1"/><rect x="0" y="148" width="2" height="1"/><rect x="0" y="156" width="2" height="1"/></g>
 <rect x="0" y="161" width="2" height="3" fill="#5080c0"/>
 <rect x="0" y="208" width="2" height="1.5" fill="#d09050"/>
 <rect x="0" y="241" width="2" height="1.5" fill="#d09050"/>
 <rect x="0" y="272" width="2" height="1.5" fill="#d09050"/>
</svg>

</body></html>
